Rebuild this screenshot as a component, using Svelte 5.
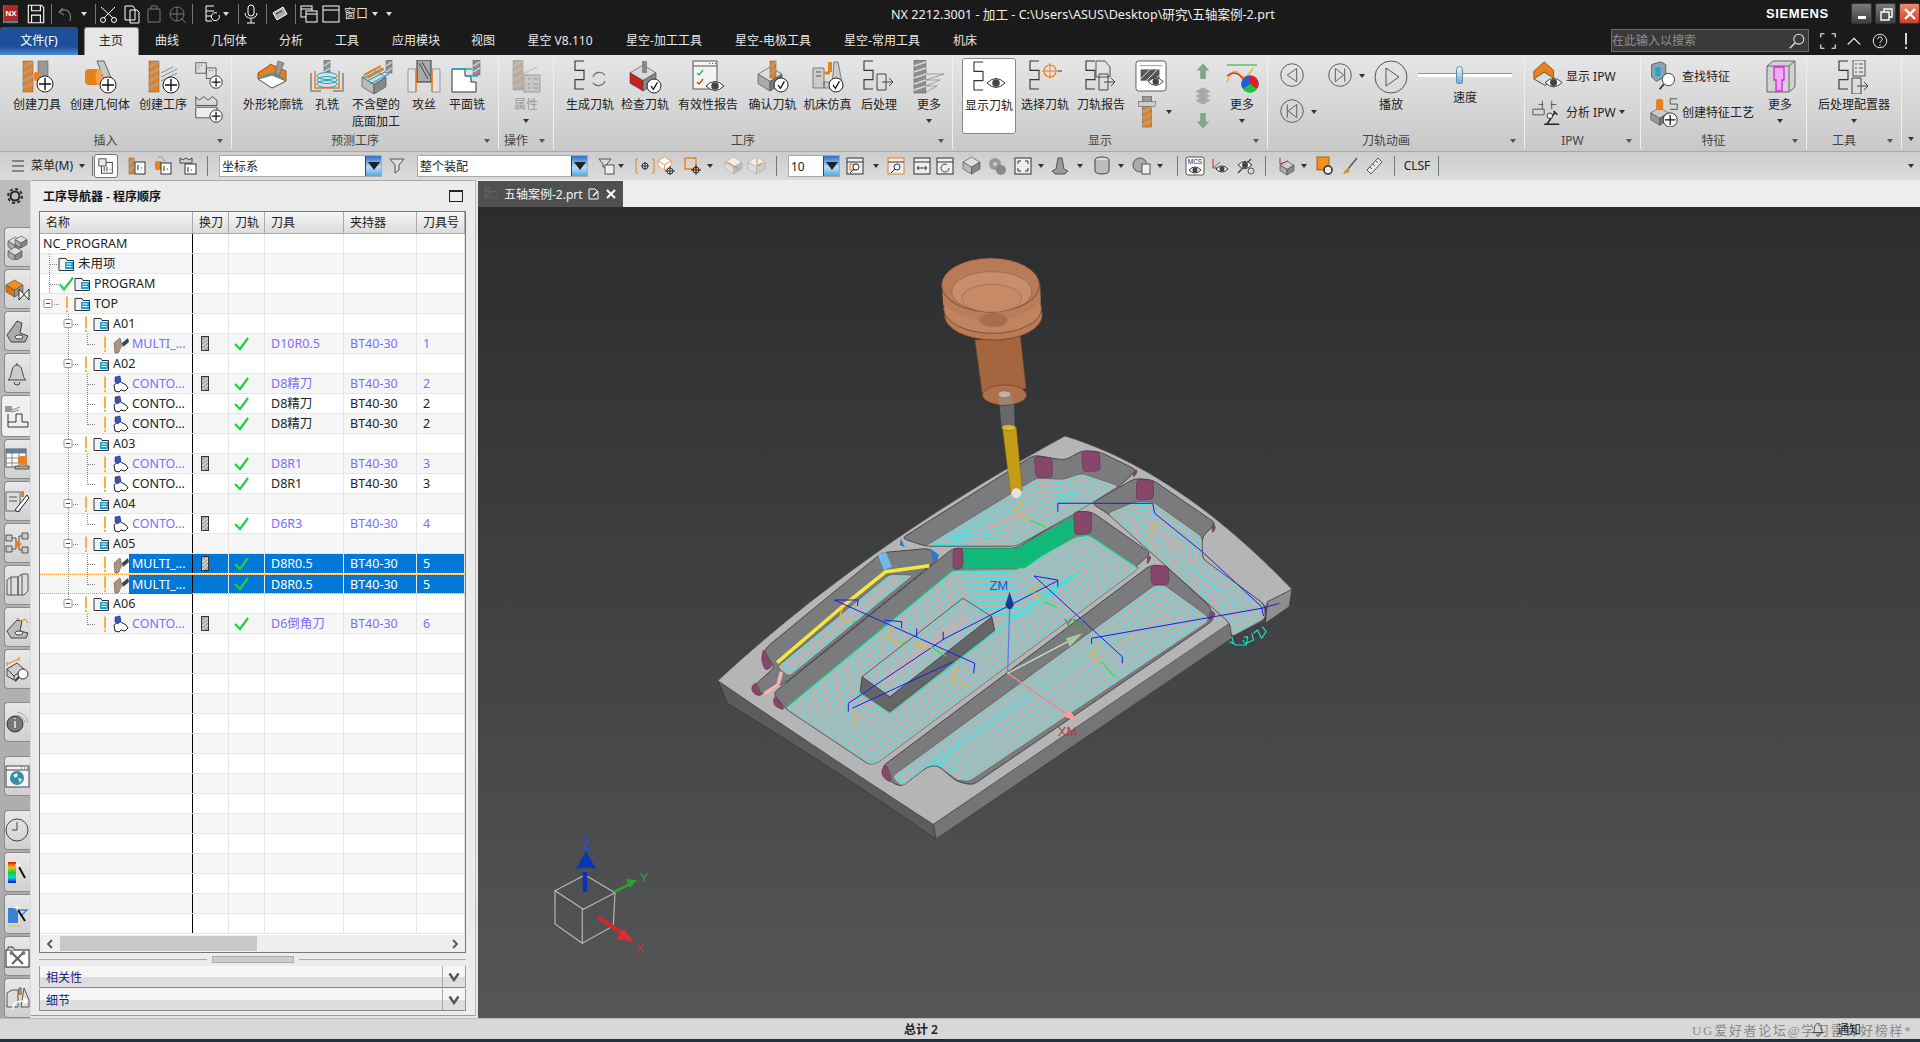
<script>
	// ---------- small svg helpers for the icons ----------
	const mill = (x, y, w, h) => {
		let s = `<rect x="${x}" y="${y}" width="${w}" height="${h}" fill="#e8801e" stroke="#7a5a3a" stroke-width=".5"/>`;
		for (let k = y + 4; k < y + h; k += 7) s += `<path d="M${x} ${k + 2}L${x + w} ${k - 3}" stroke="#a2a2a2" stroke-width="2.2"/>`;
		return s;
	};
	const gmill = (x, y, w, h) => {
		let s = `<rect x="${x}" y="${y}" width="${w}" height="${h}" fill="#8e8e8e" stroke="#555" stroke-width=".5"/>`;
		for (let k = y + 4; k < y + h; k += 6) s += `<path d="M${x} ${k + 2}L${x + w} ${k - 2}" stroke="#d8d8d8" stroke-width="1.4"/>`;
		return s;
	};
	const plus = (cx, cy, r = 8) =>
		`<circle cx="${cx}" cy="${cy}" r="${r}" fill="#fff" stroke="#222"/><path d="M${cx - r + 2} ${cy}H${cx + r - 2}M${cx} ${cy - r + 2}V${cy + r - 2}" stroke="#111" stroke-width="1.4"/>`;
	const tick = (cx, cy, r = 7) =>
		`<circle cx="${cx}" cy="${cy}" r="${r}" fill="#fff" stroke="#222"/><path d="M${cx - 3} ${cy}l2.4 3.4 4-7" fill="none" stroke="#111" stroke-width="1.3"/>`;
	const eye = (cx, cy, r = 8) =>
		`<path d="M${cx - r} ${cy}Q${cx} ${cy - r} ${cx + r} ${cy}Q${cx} ${cy + r} ${cx - r} ${cy}Z" fill="#fff" stroke="#333"/><circle cx="${cx}" cy="${cy}" r="${r * 0.42}" fill="#444"/>`;
	const zig = (x, y, w = 9, h = 28) => {
		const s = h / 3;
		return `<path d="M${x + w} ${y}H${x}V${y + s}H${x + w}V${y + 2 * s}H${x}V${y + h}H${x + w}" fill="none" stroke="#333" stroke-width="1.1"/>`;
	};
	const arrowBox = (x, y) =>
		`<path d="M${x} ${y}h9v16h-9zM${x + 5} ${y + 8}h11M${x + 12} ${y + 4}l4 4-4 4" fill="none" stroke="#444"/>`;
	const cube = (x, y, s, t, l, r) =>
		`<path d="M${x} ${y + s * 0.3}L${x + s / 2} ${y}L${x + s} ${y + s * 0.3}L${x + s / 2} ${y + s * 0.6}Z" fill="${t}" stroke="#444" stroke-width=".6"/><path d="M${x} ${y + s * 0.3}L${x + s / 2} ${y + s * 0.6}V${y + s}L${x} ${y + s * 0.7}Z" fill="${l}" stroke="#444" stroke-width=".6"/><path d="M${x + s} ${y + s * 0.3}L${x + s / 2} ${y + s * 0.6}V${y + s}L${x + s} ${y + s * 0.7}Z" fill="${r}" stroke="#444" stroke-width=".6"/>`;
	const circ = (cx, cy, r, inner) =>
		`<circle cx="${cx}" cy="${cy}" r="${r}" fill="none" stroke="#555"/><path d="${inner}" fill="none" stroke="#555"/>`;

	const icons = {
		createTool: mill(3, 1, 10, 31) + `<rect x="18" y="1" width="10" height="20" fill="#999" stroke="#555" stroke-width=".5"/><rect x="14" y="12" width="6" height="9" rx="2" fill="#e8801e"/>` + plus(25, 24),
		createGeom: `<path d="M14 1h7l10 24h-8z" fill="#c8c8c8" stroke="#666"/><rect x="2" y="9" width="15" height="16" rx="4" fill="#e8801e"/><ellipse cx="16" cy="17" rx="3.5" ry="8" fill="#f4a04c"/>` + plus(25, 25),
		createOp: mill(3, 1, 10, 31) + `<path d="M15 17L31 9M15 21L31 13M15 13l12-6" stroke="#888"/>` + plus(25, 25),
		smallA: `<path d="M2 3h12v12h-12zM14 9h11v12h-11z" fill="#ddd" stroke="#555"/><path d="M5 6h1M8 6h1M5 9h1M17 12h1M20 12h1" stroke="#333"/>` + plus(25, 25, 7),
		smallB: `<path d="M2 3l4 4 5-4 5 4 5-4 5 4V13H2zM2 19h24" fill="none" stroke="#444"/><path d="M2 15h24v12H2z" fill="#eee" stroke="#444"/>` + plus(25, 25, 7),
		profile: `<path d="M2 13L14 5v-1l16 7v10L16 28 2 19z" fill="#e8801e" stroke="#8a5a20"/><path d="M2 19l14 9 14-7-14-6z" fill="#fff" stroke="#666"/><path d="M5 18l11 -5 12 5" fill="none" stroke="#1aa7c9" stroke-width="1.4"/>` + `<path d="M22 1l6 2-5 13-4-2z" fill="#999" stroke="#555" stroke-width=".6"/>`,
		hole: gmill(14, 0, 6, 12) + `<path d="M1 13v18h10M33 13v18H23" fill="none" stroke="#999" stroke-width="2"/><path d="M5 11v17h24V11" fill="none" stroke="#e8801e" stroke-width="1.5"/><ellipse cx="17" cy="16" rx="10" ry="3.5" fill="none" stroke="#1aa7c9"/><ellipse cx="17" cy="20" rx="10" ry="3.5" fill="none" stroke="#1aa7c9"/><ellipse cx="17" cy="24" rx="10" ry="3.5" fill="none" stroke="#1aa7c9"/>`,
		floor: cube(3, 10, 24, '#e0e0e0', '#bbb', '#888') + `<path d="M5 18L24 8M8 21L28 11M11 24L30 14" stroke="#1aa7c9" stroke-width="1.3"/><path d="M5 15L22 6M8 18L25 9" stroke="#e8801e" stroke-width="2"/>` + gmill(27, 0, 6, 13),
		tap: `<path d="M1 9h8v23H1zM25 9h8v23h-8z" fill="#e4e4e4" stroke="#999"/><rect x="10" y="0" width="14" height="22" fill="#aaa" stroke="#333"/><path d="M12 3l9 16M15 2l8 14" stroke="#444"/><path d="M9 10v22M25 10v22" stroke="#e8801e" stroke-width="1.4"/>`,
		face: `<path d="M2 9v23h24V22h-5v-6h-6V9z" fill="#fff" stroke="#333"/><path d="M2 9h20M15 16h13" stroke="#1aa7c9" stroke-width="1.4"/>` + gmill(23, 0, 7, 15),
		attr: `<g opacity=".6">` + mill(4, 0, 10, 30).replace('#e8801e', '#a68a72') + `<path d="M14 14l14-7" stroke="#999"/><rect x="15" y="15" width="16" height="17" fill="#b8b8b8" stroke="#777"/><path d="M19 19h2M24 19h5M19 24h2M24 24h5M19 28h2M24 28h5" stroke="#666"/></g>`,
		gen: zig(2, 1) + `<path d="M20 17a7 7 0 0 1 12-2M32 21a7 7 0 0 1-12 2" fill="none" stroke="#777" stroke-width="1.3"/>`,
		verify: cube(2, 5, 26, '#d8d8d8', '#c82020', '#888') + `<rect x="14" y="1" width="5" height="12" fill="#888"/>` + tick(26, 26),
		report: `<rect x="2" y="1" width="24" height="28" fill="#f3f3f3" stroke="#555"/><path d="M2 6h24M18 3.5h1M21 3.5h1M24 3.5h1" stroke="#555"/><path d="M6 13l2 2 4-5" fill="none" stroke="#1fc23e" stroke-width="1.3"/><path d="M6 22l2 2 4-5" fill="none" stroke="#d8352b" stroke-width="1.3"/>` + eye(24, 26, 9),
		confirm: cube(2, 7, 24, '#ddd', '#aaa', '#777') + mill(14, 1, 6, 17) + tick(25, 25),
		machine: `<path d="M2 8h11v20H2zM23 2h4l5 26H21zM13 22h9v6h-9z" fill="#ccc" stroke="#555" stroke-width=".7"/><path d="M5 12h5M5 16h5" stroke="#555"/><rect x="17" y="2" width="4" height="10" fill="#e8801e"/><path d="M13 13h6" stroke="#e8801e" stroke-width="3"/>` + tick(25, 25),
		post: zig(2, 1) + arrowBox(15, 14),
		more: gmill(2, 0, 12, 33) + `<path d="M14 14h18L14 20M14 20h14L14 26M14 26h11L14 32" fill="#ddd" stroke="#777" stroke-width=".6"/>`,
		show: zig(2, 1) + eye(24, 22, 9),
		select: zig(2, 1) + `<circle cx="22" cy="11" r="6" fill="none" stroke="#e8801e" stroke-width="1.2"/><path d="M14 11h16M22 3v16" stroke="#e8801e"/><path d="M30 11h4" stroke="#333"/>`,
		toolrep: zig(2, 1) + `<path d="M12 1h9l5 6v10H12z" fill="none" stroke="#555"/>` + arrowBox(15, 14),
		hatchEye: `<rect x="1" y="1" width="32" height="32" rx="3" fill="#fff" stroke="#555"/><path d="M5 6h24" stroke="#e8801e"/><rect x="6" y="10" width="20" height="12" fill="#555"/><path d="M6 20l10-10M12 22l12-12M20 22l6-6" stroke="#eee"/>` + eye(22, 23, 8),
		cutter: `<rect x="12" y="0" width="10" height="7" fill="#999" stroke="#444" stroke-width=".5"/><rect x="8" y="6" width="18" height="5" fill="#ccc" stroke="#444" stroke-width=".5"/>` + mill(12, 11, 10, 22),
		up: `<path d="M17 5l9 10h-5v12h-8V15H8z" fill="#7fa785"/>`,
		layers: `<path d="M17 4l11 6-11 6-11-6zM17 11l11 6-11 6-11-6zM17 18l11 6-11 6-11-6z" fill="#aaa" stroke="#999" stroke-width=".5"/>`,
		down: `<path d="M17 29L8 19h5V7h8v12h5z" fill="#7fa785"/>`,
		moreDisp: `<path d="M2 5h30" stroke="#1faa3c"/><path d="M2 22Q8 6 14 14T28 8" fill="none" stroke="#e8b81e" stroke-width="1.5"/><path d="M2 16Q12 8 20 22" fill="none" stroke="#e02a2a" stroke-width="1.5"/><circle cx="25" cy="24" r="8.5" fill="#1fc23e"/><path d="M25 24V15.5A8.5 8.5 0 0 1 32 29z" fill="#d82020"/><path d="M25 24L32 29A8.5 8.5 0 0 1 18 29z" fill="#1fc23e"/><path d="M25 24V15.5A8.5 8.5 0 0 0 18 29z" fill="#1f5fd8"/>`,
		prev: circ(17, 16, 12, 'M22 9L12 16l10 7zM24 9'),
		next: circ(17, 16, 12, 'M12 9l9 7-9 7zM22 9v14'),
		first: circ(17, 16, 12, 'M22 9l-9 7 9 7zM12 9v14'),
		play: circ(17, 17, 16, 'M12 8l13 9-13 9z'),
		ipwShow: `<path d="M3 12L14 2l10 9v8l-9 8-12-7z" fill="#e8801e" stroke="#8a5a20"/><path d="M3 20l12 7 9-8-10-6z" fill="#ddd" stroke="#555"/>` + eye(24, 24, 9),
		ipwAna: `<path d="M2 20h12V14H2zM12 5v9M22 5v9M8 9h5M27 9h-6" fill="none" stroke="#555"/><path d="M14 30h16M17 30l8-12M24 16l4 4" fill="none" stroke="#222" stroke-width="1.6"/><circle cx="20" cy="21" r="3" fill="#eee" stroke="#333"/>`,
		fFind: `<path d="M3 4l10-3 6 3v14l-11 5-5-5z" fill="#8aa4b4" stroke="#555"/><rect x="7" y="7" width="6" height="10" fill="#1aa7c9"/><circle cx="22" cy="21" r="7" fill="#fff" stroke="#333"/><path d="M17 26l-5 6" stroke="#333" stroke-width="2"/>`,
		fProc: cube(2, 12, 20, '#ccc', '#999', '#777') + `<rect x="8" y="2" width="8" height="13" rx="3" fill="#e8801e"/><path d="M24 2h8M24 2v6h8v6h-8" fill="none" stroke="#444"/>` + plus(24, 26),
		fMore: `<path d="M4 6L10 1h22v26l-6 5H4z" fill="#cfd4cf" stroke="#666"/><path d="M4 6h22v26M26 6l6-5" fill="none" stroke="#666"/><path d="M11 7h10v13h-2v11h-6V20h-2z" fill="#f5a8f5" stroke="#e020e0" stroke-width="1.3"/>`,
		postCfg: zig(2, 1) + `<rect x="16" y="0" width="12" height="16" fill="none" stroke="#555"/><path d="M18 4h2M22 4h4M18 8h2M22 8h4M18 12h2M22 12h4" stroke="#555"/>` + arrowBox(15, 18)
	};

	// 20px toolbar and quick access glyphs
	const t20 = {
		filt: `<path d="M2 3h14l-5 6v5l-4 3V9z" fill="#ddd" stroke="#555"/>`,
		doc: `<rect x="5" y="6" width="12" height="12" fill="#fff" stroke="#333"/><rect x="2" y="2" width="8" height="8" fill="#e8e8e8" stroke="#444"/><path d="M8 11v5M11 11v5M14 14h1" stroke="#222"/>`,
		mdoc: mill(2, 2, 5, 16) + `<rect x="8" y="6" width="10" height="12" fill="#fff" stroke="#333"/><path d="M11 9v5M14 12h1" stroke="#222"/>`,
		odoc: `<rect x="2" y="5" width="7" height="9" rx="2" fill="#e8801e"/><path d="M5 1h4l3 5" fill="none" stroke="#999"/><rect x="8" y="7" width="10" height="11" fill="#fff" stroke="#333"/><path d="M11 10v5M14 13h1" stroke="#222"/>`,
		cdoc: `<path d="M2 2l3 2 3-2 3 2 3-2v5H2z" fill="none" stroke="#444"/><rect x="7" y="8" width="11" height="10" fill="#fff" stroke="#333"/><path d="M10 11v5M13 14h1" stroke="#222"/>`,
		listf: `<path d="M2 3h12l-4 5v3H6V8z" fill="#ddd" stroke="#555"/><rect x="8" y="9" width="9" height="9" fill="#eee" stroke="#555"/>`,
		cbrack: `<path d="M3 3H1v14h2M17 3h2v14h-2" fill="none" stroke="#e8801e"/><path d="M6 10h8M10 6v8" stroke="#333"/><circle cx="10" cy="10" r="3" fill="none" stroke="#333"/>`,
		ocube: cube(2, 1, 13, '#fff', '#fff', '#fff').replace(/#444/g, '#e8801e') + `<circle cx="14" cy="15" r="3" fill="none" stroke="#333"/><path d="M9 15h10M14 10v9" stroke="#333"/>`,
		osq: `<path d="M2 2h11v11H2z" fill="none" stroke="#e8801e" stroke-width="1.3"/><circle cx="13" cy="14" r="3" fill="none" stroke="#222"/><path d="M8 14h10M13 9v10" stroke="#222"/>`,
		cubeA: cube(2, 1, 17, '#eee', '#ddd', '#bbb').replace(/#444/g, '#aaa') + `<path d="M4 6l12 7" stroke="#e8801e"/>`,
		cubeB: cube(2, 1, 17, '#eee', '#ddd', '#ccc').replace(/#444/g, '#aaa') + `<path d="M11 2v8l5-3" fill="none" stroke="#e8801e"/>`,
		frame: `<rect x="2" y="2" width="16" height="16" fill="#eee" stroke="#333"/><path d="M2 6h16" stroke="#333"/><rect x="5" y="8" width="7" height="6" fill="#ddd" stroke="#e8801e"/><circle cx="11" cy="11" r="3" fill="#fff" stroke="#333"/><path d="M9 13l-4 4" stroke="#333"/>`,
		frameO: `<rect x="2" y="2" width="16" height="16" fill="#eee" stroke="#e8801e"/><path d="M2 6h16" stroke="#333"/><circle cx="11" cy="11" r="3" fill="#fff" stroke="#333"/><path d="M9 13l-4 4" stroke="#333"/>`,
		frameW: `<rect x="2" y="2" width="16" height="16" fill="#eee" stroke="#333"/><path d="M2 6h16M5 12h10M5 12l2-2M5 12l2 2M15 12l-2-2M15 12l-2 2" fill="none" stroke="#333"/>`,
		frameR: `<rect x="2" y="2" width="16" height="16" fill="#eee" stroke="#333"/><path d="M2 6h16" stroke="#333"/><path d="M14 12a4 4 0 1 1-2-3.4" fill="none" stroke="#444"/>`,
		hex: cube(2, 1, 17, '#ddd', '#bbb', '#888'),
		gears: `<circle cx="8" cy="8" r="6" fill="#999"/><circle cx="14" cy="14" r="5" fill="#888"/><circle cx="8" cy="8" r="2" fill="#ccc"/>`,
		corners: `<rect x="2" y="2" width="16" height="16" fill="#eee" stroke="#333"/><path d="M5 8V5h3M15 8V5h-3M5 12v3h3M15 12v3h-3" fill="none" stroke="#333"/>`,
		hat: `<path d="M8 2h4l2 11 4 2-3 3H5l-3-3 4-2z" fill="#999" stroke="#555"/>`,
		cyl: `<ellipse cx="10" cy="4" rx="7" ry="3" fill="#ddd" stroke="#444"/><path d="M3 4v11c0 4 14 4 14 0V4" fill="#bbb" stroke="#444"/>`,
		gcirc: `<circle cx="8" cy="9" r="7" fill="#aaa" stroke="#555"/><rect x="10" y="8" width="8" height="10" fill="#eee" stroke="#555"/>`,
		mcs: `<rect x="1" y="1" width="18" height="18" rx="2" fill="#fff" stroke="#555"/><text x="10" y="8" font-size="6.5" font-family="Liberation Sans" text-anchor="middle" fill="#222">MCS</text>` + eye(10, 14, 6),
		axEye: `<path d="M3 3v9h9" fill="none" stroke="#d02020"/><path d="M3 12L10 6" stroke="#22aa44"/>` + eye(12, 13, 6),
		pct: `<path d="M3 17L16 3" stroke="#555" stroke-width="1.6"/>` + eye(10, 9, 7) + `<circle cx="16" cy="15" r="3" fill="none" stroke="#555"/>`,
		axCube: cube(3, 5, 14, '#ccc', '#aaa', '#888') + `<path d="M3 8V2M3 8l8-3" stroke="#d02020"/>`,
		oGear: `<rect x="2" y="1" width="12" height="13" fill="#f09020" stroke="#b06010"/><circle cx="13" cy="14" r="4" fill="#eee" stroke="#333" stroke-width="1.6"/>`,
		brush: `<path d="M17 2L8 13" stroke="#555" stroke-width="1.4"/><path d="M8 12l-3 2-2 4 5-1 2-3z" fill="#c0a030"/>`,
		ruler: `<path d="M14 2l4 4L7 18l-4-4z" fill="#eee" stroke="#555"/><path d="M12 5l2 2M9 8l2 2M6 11l2 2" stroke="#555"/>`,
		menu: `<path d="M4 5h12M4 10h12M4 15h12" stroke="#333"/>`,
		save: `<path d="M3 2h12l2 2v14H3z" fill="none" stroke="#fff"/><path d="M6 2v5h8V2M6 18v-7h8v7" fill="none" stroke="#fff"/>`,
		undo: `<path d="M4 8c8-5 13 0 11 9M4 8l4-4M4 8l5 3" fill="none" stroke="#777" stroke-width="1.2"/>`,
		cut: `<path d="M17 3L6 14M3 3l12 11" stroke="#fff"/><circle cx="5" cy="16" r="2.5" fill="none" stroke="#fff"/><circle cx="16" cy="16" r="2.5" fill="none" stroke="#fff"/>`,
		copy: `<path d="M3 2h8l2 3v11H3zM8 6h7l2 2v11H8z" fill="#1a1a1a" stroke="#fff"/>`,
		paste: `<path d="M3 5h12v13H3zM6 5V2h6v3" fill="none" stroke="#777"/>`,
		snap: `<circle cx="9" cy="10" r="7" fill="none" stroke="#777"/><path d="M2 10h14M9 3v14M13 14l5 5" stroke="#777"/>`,
		sloop: `<path d="M12 2H4v5h8M4 7v5h6M4 12v5h6" fill="none" stroke="#fff"/><path d="M17 11a4 4 0 1 1-2-2" fill="none" stroke="#fff"/>`,
		mic: `<rect x="7" y="1" width="6" height="11" rx="3" fill="none" stroke="#fff"/><path d="M4 9c0 7 12 7 12 0M10 15v4M6 19h8" fill="none" stroke="#fff"/>`,
		hand: `<path d="M3 9l10-6 4 7-10 6z" fill="#aaa" stroke="#fff"/><path d="M6 10l6-3" stroke="#222"/>`,
		win2: `<rect x="2" y="2" width="11" height="11" fill="none" stroke="#fff"/><rect x="7" y="7" width="11" height="11" fill="#1a1a1a" stroke="#fff"/><path d="M7 10h11M2 5h11" stroke="#fff"/>`,
		win: `<rect x="2" y="2" width="16" height="16" fill="none" stroke="#fff"/><path d="M2 6h16" stroke="#fff"/>`,
		mag: `<circle cx="12" cy="8" r="5.5" fill="none" stroke="#ddd" stroke-width="1.2"/><path d="M8 12l-6 6" stroke="#ddd" stroke-width="1.6"/>`,
		corner: `<path d="M2 6V2h4M14 2h4v4M2 14v4h4M18 14v4h-4" fill="none" stroke="#fff" stroke-width="1.2"/>`,
		caret: `<path d="M3 14l7-7 7 7" fill="none" stroke="#fff" stroke-width="1.2"/>`,
		help: `<circle cx="10" cy="10" r="7.5" fill="none" stroke="#fff"/><path d="M7.5 8a2.5 2.5 0 1 1 3.4 2.3c-.7.3-.9.7-.9 1.7M10 14v1.5" fill="none" stroke="#fff"/>`,
		bang: `<path d="M10 1v13M10 16.5v2.5" stroke="#fff" stroke-width="1.8"/>`,
		bell: `<path d="M5 14c2-3 0-10 5-10s3 7 5 10z" fill="none" stroke="#444"/><path d="M4 14h12M8 16a2 2 0 0 0 4 0" fill="none" stroke="#444"/>`
	};

	// strip on the far left
	const strip = {
		gear: `<circle cx="12" cy="12" r="4.5" fill="none" stroke="#222" stroke-width="2"/><circle cx="12" cy="12" r="7" fill="none" stroke="#222" stroke-width="1.8" stroke-dasharray="3 2.5"/>`,
		s1: cube(3, 2, 14, '#ddd', '#aaa', '#888') + cube(3, 12, 14, '#ddd', '#aaa', '#888') + cube(10, 1, 12, '#ddd', '#aaa', '#888'),
		s2: cube(1, 3, 17, '#f09020', '#e07010', '#999') + `<path d="M14 12l10 11V12L14 23z" fill="#fff" stroke="#222"/>`,
		s3: `<path d="M2 16L12 2l5 2-2 10 8 3-3 6H6z" fill="#aaa" stroke="#444"/><ellipse cx="14" cy="18" rx="4" ry="2" fill="#eee" stroke="#444"/>`,
		s4: `<path d="M12 2v2c-7 0-4 12-9 15h18c-5-3-2-15-9-15M9 21a3 3 0 0 0 6 0" fill="#ccc" stroke="#444"/>`,
		s5: `<path d="M1 2h7v6H1z" fill="#999"/><path d="M8 6l8-3M8 8l7-2" stroke="#888"/><path d="M4 10v13h20v-5h-6v-8h-6v8H4" fill="none" stroke="#333"/>`,
		s6: `<rect x="1" y="2" width="20" height="18" fill="#fff" stroke="#555"/><path d="M1 6h20M1 11h20M1 16h20M7 2v18M14 2v18" stroke="#888"/><rect x="1" y="2" width="20" height="4" fill="#5d7fa8"/><rect x="13" y="9" width="9" height="9" rx="3" fill="#e8801e"/><path d="M10 19h14v3H10z" fill="#aaa" stroke="#555"/>`,
		s7: `<rect x="1" y="3" width="14" height="19" fill="#ddd" stroke="#666"/><path d="M4 8h8M4 12h8" stroke="#555"/><path d="M16 2h3v6h-3z" fill="#e8801e"/><path d="M22 6l-12 15 3 2L24 9z" fill="#fff" stroke="#222"/>`,
		s8: `<path d="M1 4h6v6H1zM1 15h6v6H1zM17 2h6v6h-6zM17 16h6v6h-6z" fill="#ccc" stroke="#555"/><path d="M7 7h4v11H7M17 5h-3v14h3" fill="none" stroke="#555"/><path d="M10 8l7 5-7 5z" fill="#e8801e"/>`,
		s9: `<path d="M2 7l4-3h7v18H6l-4 0zM13 4l4-3h6v17l-4 4h-6z" fill="#ddd" stroke="#555"/><path d="M6 4v18M17 2v20" stroke="#555"/>`,
		s10: `<path d="M2 16L12 5l5 1-2 10 8 2-2 5H6z" fill="#bbb" stroke="#444"/><ellipse cx="14" cy="18" rx="4" ry="2" fill="#eee" stroke="#444"/><path d="M12 3l4 3 4-2 3 4" fill="none" stroke="#e8801e"/>`,
		s11: `<path d="M2 12l10-6 7 6-10 7zM2 12v7l7 4v-4" fill="#ccc" stroke="#444"/><path d="M2 7l12-5M2 5v4M14 0v4" stroke="#e8801e"/><circle cx="18" cy="17" r="5" fill="#fff" stroke="#333"/><path d="M14 20l-4 4" stroke="#333" stroke-width="2"/>`,
		s12: `<circle cx="10" cy="14" r="8" fill="#777" stroke="#333"/><path d="M10 11v7M10 8v1" stroke="#fff" stroke-width="1.3"/><path d="M12 2a12 12 0 0 1 11 11M12 5a9 9 0 0 1 8 8" fill="none" stroke="#aaa"/>`,
		s13: `<rect x="1" y="2" width="23" height="21" fill="#f5f5f5" stroke="#444"/><path d="M1 6h23M16 4h1M19 4h1M22 4h1" stroke="#444"/><circle cx="12" cy="14" r="7" fill="#3a8aa8"/><path d="M8 11l4-2 1 3-3 2zM13 14l4 1-2 4z" fill="#bfe"/>`,
		s14: `<circle cx="12" cy="12" r="11" fill="none" stroke="#444"/><path d="M12 4v8H7" fill="none" stroke="#444"/>`,
		s15: `<defs><linearGradient id="rb" x1="0" y1="0" x2="0" y2="1"><stop offset="0" stop-color="#e01010"/><stop offset=".25" stop-color="#f0c010"/><stop offset=".5" stop-color="#10d030"/><stop offset=".75" stop-color="#10d0d0"/><stop offset="1" stop-color="#1010e0"/></linearGradient></defs><rect x="3" y="2" width="8" height="21" fill="url(#rb)"/><path d="M14 7l6 11" stroke="#111" stroke-width="2"/><path d="M13 2v6M10 5h6" stroke="#fff"/>`,
		s16: `<path d="M3 6h10v15H3z" fill="#3a7fd8"/><path d="M13 8h9l-6 6" fill="none" stroke="#3a7fd8" stroke-width="1.4"/><path d="M3 24h12" stroke="#e0c010"/><path d="M13 8l7 11" stroke="#111" stroke-width="2"/><path d="M12 3v6M9 6h6" stroke="#fff"/>`,
		s17: `<rect x="1" y="6" width="23" height="17" fill="#fff" stroke="#222"/><path d="M3 6V3h5l2 3" fill="#ccc" stroke="#444"/><path d="M7 9l11 11M18 9L7 20" stroke="#666" stroke-width="2.2"/><circle cx="6.5" cy="9" r="2" fill="#777"/><circle cx="18.5" cy="9" r="2" fill="#777"/>`,
		s18: `<path d="M2 7l5-3h6v17H2zM14 2h2v6h-2zM19 2l5 12v7h-8z" fill="#ddd" stroke="#555"/><path d="M14 4h3v5h-3z" fill="#e8801e"/><path d="M8 23c0-7 5-8 13-8M18 12l4 3-4 3" fill="none" stroke="#fff" stroke-width="1.6"/>`
	};
	const stripBtns = [
		{ i: 's1' }, { i: 's2' }, { i: 's3' }, { i: 's4' }, { i: 's5', on: true }, { i: 's6' }, { i: 's7' }, { i: 's8' },
		{ i: 's9' }, { i: 's10' }, { i: 's11' }, { i: 's12', gap: 13 }, { i: 's13', gap: 14 }, { i: 's14', gap: 14 },
		{ i: 's15' }, { i: 's16' }, { i: 's17' }, { i: 's18' }
	];

	// ---------- bars are laid out from the centre of each element ----------
	function place(items) {
		let end = 0;
		return items.map((it) => {
			const w = it.w ?? (it.tri ? 7 : it.sep ? 1 : 20);
			const ml = it.c - w / 2 - end;
			end = it.c + w / 2;
			return { ...it, w, ml };
		});
	}
	const qat = place([
		{ c: 36, i: 'save', s: 22 }, { c: 51, sep: 1 }, { c: 65, i: 'undo' }, { c: 84, tri: 1 }, { c: 95, sep: 1 },
		{ c: 108, i: 'cut' }, { c: 132, i: 'copy' }, { c: 155, i: 'paste' }, { c: 178, i: 'snap' }, { c: 192, sep: 1 },
		{ c: 212, i: 'sloop' }, { c: 226, tri: 1 }, { c: 238, sep: 1 }, { c: 251, i: 'mic' }, { c: 266, sep: 1 },
		{ c: 280, i: 'hand' }, { c: 295, sep: 1 }, { c: 309, i: 'win2' }, { c: 331, i: 'win' },
		{ c: 356, w: 26, text: '窗口' }, { c: 375, tri: 1 }, { c: 389, tri: 1 }
	]);
	const tabs = place([
		{ c: 39, w: 78, text: '文件(F)', file: true }, { c: 111, w: 55, text: '主页', on: true }, { c: 167, w: 40, text: '曲线' },
		{ c: 229, w: 50, text: '几何体' }, { c: 291, w: 40, text: '分析' }, { c: 347, w: 40, text: '工具' },
		{ c: 416, w: 60, text: '应用模块' }, { c: 483, w: 40, text: '视图' }, { c: 560, w: 80, text: '星空 V8.110' },
		{ c: 664, w: 90, text: '星空-加工工具' }, { c: 773, w: 90, text: '星空-电极工具' },
		{ c: 882, w: 90, text: '星空-常用工具' }, { c: 965, w: 40, text: '机床' }
	]);
	const tbar = place([
		{ c: 18, i: 'menu' }, { c: 52, w: 43, text: '菜单(M)' }, { c: 82, tri: 1 }, { c: 92, sep: 1 },
		{ c: 106, i: 'doc', box: 1 }, { c: 137, i: 'mdoc' }, { c: 163, i: 'odoc' }, { c: 188, i: 'cdoc' }, { c: 207, sep: 1 },
		{ c: 300.5, w: 163, combo: '坐标系' }, { c: 398, i: 'filt' }, { c: 502.5, w: 171, combo: '整个装配' },
		{ c: 607, i: 'listf' }, { c: 621, tri: 1 }, { c: 645, i: 'cbrack' }, { c: 666, i: 'ocube' }, { c: 693, i: 'osq' }, { c: 710, tri: 1 },
		{ c: 733, i: 'cubeA' }, { c: 756, i: 'cubeB' }, { c: 776, sep: 1 }, { c: 814, w: 52, combo: '10' },
		{ c: 855, i: 'frame' }, { c: 876, tri: 1 }, { c: 896, i: 'frameO' }, { c: 922, i: 'frameW' }, { c: 945, i: 'frameR' },
		{ c: 971, i: 'hex' }, { c: 997, i: 'gears' }, { c: 1023, i: 'corners' }, { c: 1041, tri: 1 }, { c: 1060, i: 'hat' }, { c: 1080, tri: 1 },
		{ c: 1102, i: 'cyl' }, { c: 1121, tri: 1 }, { c: 1142, i: 'gcirc' }, { c: 1160, tri: 1 }, { c: 1177, sep: 1 },
		{ c: 1195, i: 'mcs' }, { c: 1220, i: 'axEye' }, { c: 1245, i: 'pct' }, { c: 1265, sep: 1 }, { c: 1287, i: 'axCube' }, { c: 1304, tri: 1 },
		{ c: 1325, i: 'oGear' }, { c: 1350, i: 'brush' }, { c: 1374, i: 'ruler' }, { c: 1394, sep: 1 },
		{ c: 1417, w: 30, text: 'CLSF' }, { c: 1438, sep: 1 }, { c: 1911, tri: 1 }
	]);

	// ---------- ribbon ----------
	const ribbon = [
		{ title: '插入', w: 232, pad: 6, items: [
			{ w: 62, i: 'createTool', l: ['创建刀具'] }, { w: 64, i: 'createGeom', l: ['创建几何体'] }, { w: 62, i: 'createOp', l: ['创建工序'] },
			{ w: 30, col: ['smallA', 'smallB'] } ] },
		{ title: '预测工序', w: 267, pad: 10, items: [
			{ w: 62, i: 'profile', l: ['外形轮廓铣'] }, { w: 46, i: 'hole', l: ['孔铣'] }, { w: 52, i: 'floor', l: ['不含壁的', '底面加工'] },
			{ w: 44, i: 'tap', l: ['攻丝'] }, { w: 42, i: 'face', l: ['平面铣'] } ] },
		{ title: '操作', w: 55, pad: 7, items: [{ w: 40, i: 'attr', l: ['属性'], tri: true, dim: true }] },
		{ title: '工序', w: 399, pad: 8, items: [
			{ w: 56, i: 'gen', l: ['生成刀轨'] }, { w: 54, i: 'verify', l: ['检查刀轨'] }, { w: 72, i: 'report', l: ['有效性报告'] },
			{ w: 57, i: 'confirm', l: ['确认刀轨'] }, { w: 53, i: 'machine', l: ['机床仿真'] }, { w: 50, i: 'post', l: ['后处理'] },
			{ w: 50, i: 'more', l: ['更多'], tri: true } ] }
	];

	// ---------- operation navigator ----------
	const op = (name, kind, tool, no, link, cutter) => ({ t: 'op', name, kind, tool, no, link, cutter });
	const rows = [
		{ t: 'root', name: 'NC_PROGRAM' }, { t: 'unused', name: '未用项' }, { t: 'prog', name: 'PROGRAM' }, { t: 'top', name: 'TOP' },
		{ t: 'grp', name: 'A01' }, op('MULTI_...', 'm', 'D10R0.5', 1, true, true),
		{ t: 'grp', name: 'A02' }, op('CONTO...', 'c', 'D8精刀', 2, true, true), op('CONTO...', 'c', 'D8精刀', 2), op('CONTO...', 'c', 'D8精刀', 2),
		{ t: 'grp', name: 'A03' }, op('CONTO...', 'c', 'D8R1', 3, true, true), op('CONTO...', 'c', 'D8R1', 3),
		{ t: 'grp', name: 'A04' }, op('CONTO...', 'c', 'D6R3', 4, true, true),
		{ t: 'grp', name: 'A05' }, { ...op('MULTI_...', 'm', 'D8R0.5', 5, false, true), sel: 1 }, { ...op('MULTI_...', 'm', 'D8R0.5', 5), sel: 2 },
		{ t: 'grp', name: 'A06', end: true }, op('CONTO...', 'c', 'D6倒角刀', 6, true, true),
		...Array.from({ length: 15 }, () => ({ t: 'blank' }))
	];
	// the vertical run of each op is cut at the last op below its group
	const lastOps = new Set([5, 9, 12, 14, 17, 19]);
	const textX = { root: 43, unused: 78, prog: 94, top: 94, grp: 113, op: 132, blank: 43 };

	const folder = (x) =>
		`<path d="M${x} 4.5h7l1 2h6.5v10H${x}z" fill="#f2f2f2" stroke="#333"/><rect x="${x + 6}" y="8" width="8" height="7" fill="#16a2d8"/><path d="M${x + 7.5} 10h5M${x + 7.5} 12.5h5" stroke="#fff"/>`;
	const minus = (x) =>
		`<rect x="${x}" y="5.5" width="8" height="8" rx="1" fill="#fff" stroke="#999"/><path d="M${x + 2} 9.5h4" stroke="#444"/>`;
	const vdot = (x, y1, y2) => `<path d="M${x} ${y1}V${y2}" stroke="#888" stroke-dasharray="1 1"/>`;
	const hdot = (x1, x2, y) => `<path d="M${x1} ${y}H${x2}" stroke="#888" stroke-dasharray="1 1"/>`;
	const bangMark = (x) => `<rect x="${x}" y="2.5" width="2" height="12" fill="#f9b040"/><rect x="${x}" y="16" width="2" height="2" fill="#f9b040"/>`;
	const checkG = (x, y, s = 1) =>
		`<path d="M${x} ${y + 7 * s}l${4 * s} ${5 * s} ${9 * s} ${-12 * s}" fill="none" stroke="#22d044" stroke-width="${2.2}"/>`;
	const opIcon = (kind) =>
		kind === 'm'
			? `<path d="M114 9l6-5 2 7-4 8h-3z" fill="#999" stroke="#555" stroke-width=".6"/><path d="M116 8c1 3 1 6-1 10M119 7c1 3 1 6 0 11" fill="none" stroke="#e8801e"/><path d="M122 9l6-5 1 4-6 5z" fill="#444"/>`
			: `<path d="M114 11l5-4 7 4 2 3-3 3-4-1-2 2-4-1z" fill="#fff" stroke="#222"/><path d="M115 3l5-1 1 5-3 3-3-2z" fill="#3a50c8" stroke="#223" stroke-width=".5"/>`;
	function gutter(r, idx) {
		let s = '';
		const inA = idx > 3 && idx < 18;
		if (r.t === 'unused') s += vdot(49.5, 0, 20) + hdot(50, 58, 10.5) + folder(59);
		if (r.t === 'prog') s += vdot(49.5, 0, 20) + hdot(50, 59, 10.5) + checkG(60, 3.5) + folder(75);
		if (r.t === 'top') s += minus(44) + hdot(54, 60, 10.5) + bangMark(66) + folder(75);
		if (r.t === 'grp') s += (r.end ? vdot(68.5, 0, 6) : vdot(68.5, 0, 6) + vdot(68.5, 14, 20)) + minus(64) + hdot(73, 78, 10.5) + bangMark(85) + folder(94);
		if (r.t === 'op') {
			if (inA) s += vdot(68.5, 0, 20);
			s += vdot(87.5, 0, lastOps.has(idx) ? 11 : 20) + hdot(88, 96, 10.5) + bangMark(104) + opIcon(r.kind);
		}
		return s;
	}

	// ---------- the part on the canvas ----------
	// Coordinates were read off a crop that is 2.529x wide and 3x high.
	const z = ([X, Y]) => [+(700 + X / 2.529).toFixed(1), +(240 + Y / 3).toFixed(1)];
	const dOf = (pts, close = true) => 'M' + pts.map((p) => z(p).join(' ')).join('L') + (close ? 'Z' : '');
	const qarc = (p, c, q, n = 24) =>
		Array.from({ length: n + 1 }, (_, i) => {
			const t = i / n, u = 1 - t;
			return [u * u * p[0] + 2 * u * t * c[0] + t * t * q[0], u * u * p[1] + 2 * u * t * c[1] + t * t * q[1]];
		});

	const A = [45, 1322], B = [923, 588], C = [1497, 1048], D = [590, 1753];
	const topFace = [...qarc(A, [416, 915], B), ...qarc(B, [1210, 692], C).slice(1), [1435, 1085], [1425, 1125], [1345, 1145], D, ...qarc(D, [343, 1563], A).slice(1, -1)];
	const frontSide = [...qarc(A, [343, 1563], D), [597, 1797], ...qarc([597, 1797], [345, 1590], [70, 1390]).slice(1)];
	const rightSide = [D, [597, 1797], [1345, 1195], [1340, 1145]];
	const blockSide = [C, [1490, 1100], [1430, 1150], [1435, 1085]];

	const cavities = [
		[[510, 895], [845, 645], [890, 655], [925, 660], [965, 632], [1010, 635], [1105, 690], [1065, 735], [985, 790], [945, 822], [800, 918], [570, 918]],
		[[640, 925], [800, 925], [950, 815], [990, 815], [1140, 940], [1100, 982], [450, 1562], [430, 1575], [215, 1405], [185, 1360]],
		[[460, 938], [580, 925], [605, 955], [225, 1320], [160, 1365], [130, 1345], [190, 1280], [160, 1240], [170, 1220]],
		[[1140, 975], [1180, 980], [1290, 1100], [1300, 1140], [690, 1635], [650, 1625], [600, 1575], [575, 1580], [510, 1640], [480, 1625], [460, 1580]],
		[[990, 790], [1100, 715], [1145, 720], [1305, 850], [1270, 890], [1270, 955], [1430, 1095], [1430, 1140], [1345, 1190], [1340, 1150], [1030, 820]]
	];
	const floors = [
		[[570, 918], [850, 715], [920, 718], [965, 700], [1060, 738], [945, 822], [800, 918]],
		[[640, 990], [800, 988], [950, 890], [985, 885], [1110, 985], [450, 1568], [430, 1575], [215, 1405]],
		[[480, 1003], [540, 1005], [225, 1310], [195, 1280]],
		[[1150, 1035], [1175, 1035], [1285, 1130], [1285, 1145], [680, 1625], [650, 1620], [600, 1575], [575, 1580], [510, 1640], [485, 1610]],
		[[1030, 820], [1100, 785], [1145, 785], [1270, 890], [1270, 955], [1425, 1092], [1430, 1135], [1345, 1190], [1340, 1150]]
	];
	// the rings of the lower pocket ignore its notch: the concave corners make them fold over
	const ringBase = [...floors];
	ringBase[3] = [[1150, 1035], [1175, 1035], [1285, 1130], [1285, 1145], [680, 1625], [510, 1640], [485, 1610]];

	const area = (p) => p.reduce((s, a, i) => { const b = p[(i + 1) % p.length]; return s + a[0] * b[1] - b[0] * a[1]; }, 0) / 2;
	const perim = (p) => p.reduce((s, a, i) => { const b = p[(i + 1) % p.length]; return s + Math.hypot(b[0] - a[0], b[1] - a[1]); }, 0);
	const unit = (x, y) => { const l = Math.hypot(x, y) || 1; return [x / l, y / l]; };
	function inset(pts, d) {
		const n = pts.length, sg = Math.sign(area(pts));
		const out = pts.map((b, i) => {
			const a = pts[(i + n - 1) % n], c = pts[(i + 1) % n];
			const u = unit(b[0] - a[0], b[1] - a[1]), v = unit(c[0] - b[0], c[1] - b[1]);
			const n1 = [-u[1], u[0]], n2 = [-v[1], v[0]];
			const k = (sg * d) / Math.max(0.3, 1 + n1[0] * n2[0] + n1[1] * n2[1]);
			return [b[0] + (n1[0] + n2[0]) * k, b[1] + (n1[1] + n2[1]) * k];
		});
		const kept = [];
		for (let i = 0; i < n; i++) {
			const j = (i + 1) % n;
			const dot = (out[j][0] - out[i][0]) * (pts[j][0] - pts[i][0]) + (out[j][1] - out[i][1]) * (pts[j][1] - pts[i][1]);
			if (dot > 0 || j === 0) kept.push(out[i]);
			else { kept.push([(out[i][0] + out[j][0]) / 2, (out[i][1] + out[j][1]) / 2]); i++; }
		}
		return kept;
	}
	function smooth(pts, r = 2.6) {
		const n = pts.length;
		let d = '';
		pts.forEach((b, i) => {
			const a = pts[(i + n - 1) % n], c = pts[(i + 1) % n];
			const la = Math.hypot(b[0] - a[0], b[1] - a[1]), lc = Math.hypot(c[0] - b[0], c[1] - b[1]);
			const ra = Math.min(r, la / 2), rc = Math.min(r, lc / 2);
			const p = [b[0] + ((a[0] - b[0]) / (la || 1)) * ra, b[1] + ((a[1] - b[1]) / (la || 1)) * ra];
			const q = [b[0] + ((c[0] - b[0]) / (lc || 1)) * rc, b[1] + ((c[1] - b[1]) / (lc || 1)) * rc];
			d += `${i ? 'L' : 'M'}${p[0].toFixed(1)} ${p[1].toFixed(1)}Q${b[0].toFixed(1)} ${b[1].toFixed(1)} ${q[0].toFixed(1)} ${q[1].toFixed(1)}`;
		});
		return d + 'Z';
	}
	function rings(floor, step = 6) {
		let cur = inset(floor.map(z), 3);
		const res = [];
		const a0 = Math.sign(area(cur));
		for (let i = 0; i < 40 && cur.length >= 3; i++) {
			// stop once the ring has collapsed to a sliver, its lines would just pile up
			if (Math.sign(area(cur)) !== a0 || (2 * Math.abs(area(cur))) / perim(cur) < 5) break;
			res.push(smooth(cur, 4));
			cur = inset(cur, step);
		}
		return res;
	}
	const round = (pts, r = 4) => smooth(pts.map(z), r);
	const pockets = floors.map((f, i) => ({ d: round(f), lines: rings(ringBase[i]) }));

	const islandTop = [[410, 1310], [665, 1075], [738, 1130], [480, 1370]];
	const islandSide = [[410, 1310], [405, 1355], [480, 1415], [745, 1170], [738, 1130], [480, 1370]];
	const islandLines = rings(islandTop);

	const maroon = [
		[[845, 650], [890, 652], [892, 712], [850, 712]], [[965, 632], [1010, 635], [1012, 692], [968, 695]],
		[[1105, 718], [1147, 720], [1147, 778], [1103, 780]], [[945, 815], [990, 815], [990, 880], [948, 885]],
		[[1140, 975], [1185, 978], [1185, 1035], [1142, 1035]], [[640, 925], [665, 925], [665, 985], [640, 990]],
		[[160, 1225], [172, 1250], [185, 1280], [165, 1292], [155, 1260]], [[140, 1325], [158, 1368], [138, 1365], [128, 1345]],
		[[190, 1365], [215, 1410], [192, 1402], [184, 1385]], [[470, 1572], [458, 1590], [462, 1612], [482, 1628], [484, 1612]],
		[[1098, 688], [1108, 692], [1095, 716]], [[1295, 850], [1306, 860], [1295, 882]], [[1292, 1108], [1306, 1125], [1285, 1142]], [[1132, 945], [1142, 952], [1130, 976]]
	];
	const blues = [
		'905,815 905,790 1145,790 1150,820 1270,935 1420,1100 1425,1128',
		'1465,1090 1420,1105 990,1195 990,1212',
		'845,1008 1068,1250 1068,1270', '845,1008 905,1020 905,1040',
		'905,1022 620,1195 375,1390 375,1415', '640,1265 385,1405', '340,1080 695,1270 692,1300',
		'340,1080 400,1080 398,1098', '465,1140 510,1145 510,1165', '548,1165 548,1190', '615,1175 615,1200'
	];
	const oranges = [
		'818,782 800,805 805,830 835,840', '1160,848 1142,862 1140,890', '860,1030 842,1050 850,1075 870,1085',
		'362,1100 352,1135 385,1147', '490,1160 470,1190 510,1210', '555,1195 552,1220 585,1222',
		'650,1285 638,1320 680,1340', '378,1405 398,1430 390,1462', '1012,1218 985,1245 1015,1265'
	];
	const greens = ['835,840 875,862', '870,1085 902,1102', '1015,1265 1050,1312', '585,1222 622,1248', '385,1147 395,1145', '510,1210 520,1205'];
	const loops = [
		'1345,1190 1350,1212 1340,1205 1355,1215 1382,1215 1372,1200',
		'1375,1192 1385,1190 1382,1210 1400,1200 1395,1180', '1400,1180 1410,1170 1420,1195 1432,1175 1422,1160'
	];
	const pl = (s) => s.split(' ').map((p) => z(p.split(',').map(Number)).join(',')).join(' ');
	const E = (X, Y) => z([X, Y]);

	const rowBg = (i) => (i % 2 ? '#f6f6f6' : '#fff');
</script>

{#snippet ic(name, size = 34, vb = 34)}
	<svg width={size} height={size} viewBox="0 0 {vb} {vb}">{@html icons[name] ?? t20[name] ?? strip[name]}</svg>
{/snippet}

{#snippet bar(list)}
	{#each list as it}
		<div class="cell" style="margin-left:{it.ml}px;width:{it.w}px">
			{#if it.tri}<span class="tri"></span>
			{:else if it.sep}<span class="sep"></span>
			{:else if it.combo}
				<div class="combo"><span>{it.combo}</span><b><i></i></b></div>
			{:else if it.text}<span class="bartext">{it.text}</span>
			{:else if it.box}<span class="boxed">{@render ic(it.i, 18, 20)}</span>
			{:else}{@render ic(it.i, it.s ?? 20, 20)}{/if}
		</div>
	{/each}
{/snippet}

{#snippet big(name, lines, more)}
	<div class="big">
		{@render ic(name)}
		{#each lines as l}<span class="lab">{l}</span>{/each}
		{#if more}<span class="tri down"></span>{/if}
	</div>
{/snippet}

<div class="app">
	<header class="title">
		<div class="logo"><span>NX</span></div>
		<div class="qat">{@render bar(qat)}</div>
		<div class="wintitle">NX 2212.3001 - 加工 - C:\Users\ASUS\Desktop\研究\五轴案例-2.prt</div>
		<div class="siemens">SIEMENS</div>
		<div class="winbtns">
			<button class="wb"><i class="mini"></i></button>
			<button class="wb"><svg width="14" height="14" viewBox="0 0 14 14"><path d="M2 5h8v8H2zM5 5V2h8v8h-3" fill="none" stroke="#fff" stroke-width="1.4"/></svg></button>
			<button class="wb close"><svg width="14" height="14" viewBox="0 0 14 14"><path d="M2 2l10 10M12 2L2 12" stroke="#fff" stroke-width="2.4"/></svg></button>
		</div>
	</header>

	<nav class="tabs">
		{#each tabs as t}
			<div class="tab" class:file={t.file} class:on={t.on} style="margin-left:{t.ml}px;width:{t.w}px">{t.text}</div>
		{/each}
		<div class="search"><span>在此输入以搜索</span>{@render ic('mag', 18, 20)}</div>
		<div class="tools">
			{@render ic('corner', 18, 20)}
			{@render ic('caret', 18, 20)}
			{@render ic('help', 18, 20)}
			{@render ic('bang', 18, 20)}
		</div>
	</nav>

	<section class="ribbon">
		{#each ribbon as g}
			<div class="group" style="width:{g.w}px">
				<div class="items" style="padding-left:{g.pad}px">
					{#each g.items as b}
						<div class="slot" class:dim={b.dim} style="width:{b.w}px">
							{#if b.col}
								<div class="stack">{#each b.col as c}{@render ic(c, 30)}{/each}</div>
							{:else}
								{@render big(b.i, b.l, b.tri)}
							{/if}
						</div>
					{/each}
				</div>
				<div class="gtitle">{g.title}<span class="tri"></span></div>
			</div>
		{/each}

		<div class="group" style="width:315px">
			<div class="items" style="padding-left:9px">
				<div class="slot picked" style="width:54px">{@render big('show', ['显示刀轨'])}</div>
				<div class="slot" style="width:56px;margin-left:1px">{@render big('select', ['选择刀轨'])}</div>
				<div class="slot" style="width:56px">{@render big('toolrep', ['刀轨报告'])}</div>
				<div class="slot" style="width:44px">
					<div class="stack wide">
						{@render ic('hatchEye', 32)}
						<div class="row">{@render ic('cutter', 32)}<span class="tri"></span></div>
					</div>
				</div>
				<div class="slot arrows" style="width:28px;margin-left:16px">
					{@render ic('up', 24)}{@render ic('layers', 22)}{@render ic('down', 24)}
				</div>
				<div class="slot" style="width:50px">{@render big('moreDisp', ['更多'], true)}</div>
			</div>
			<div class="gtitle">显示<span class="tri"></span></div>
		</div>

		<div class="group" style="width:257px">
			<div class="items" style="padding-left:8px">
				<div class="slot" style="width:48px">
					<div class="stack">{@render ic('prev', 32)}<div class="row">{@render ic('first', 32)}<span class="tri"></span></div></div>
				</div>
				<div class="slot" style="width:42px">
					<div class="stack"><div class="row">{@render ic('next', 32)}<span class="tri"></span></div></div>
				</div>
				<div class="slot" style="width:50px">{@render big('play', ['播放'])}</div>
				<div class="slot speed">
					<div class="slider"><i></i></div>
					<span class="lab">速度</span>
				</div>
			</div>
			<div class="gtitle">刀轨动画<span class="tri"></span></div>
		</div>

		<div class="group" style="width:116px">
			<div class="items" style="padding-left:6px">
				<div class="stack">
					<div class="row wideText">{@render ic('ipwShow', 32)}<span class="lab">显示 IPW</span></div>
					<div class="row wideText">{@render ic('ipwAna', 32)}<span class="lab">分析 IPW</span><span class="tri"></span></div>
				</div>
			</div>
			<div class="gtitle">IPW<span class="tri"></span></div>
		</div>

		<div class="group" style="width:166px">
			<div class="items" style="padding-left:8px">
				<div class="stack" style="width:110px">
					<div class="row wideText">{@render ic('fFind', 30)}<span class="lab">查找特征</span></div>
					<div class="row wideText">{@render ic('fProc', 30)}<span class="lab">创建特征工艺</span></div>
				</div>
				<div class="slot" style="width:42px">{@render big('fMore', ['更多'], true)}</div>
			</div>
			<div class="gtitle">特征<span class="tri"></span></div>
		</div>

		<div class="group" style="width:95px">
			<div class="items" style="justify-content:center">
				<div class="slot" style="width:88px">{@render big('postCfg', ['后处理配置器'], true)}</div>
			</div>
			<div class="gtitle">工具<span class="tri"></span></div>
		</div>
		<div class="ribbon-end"><span class="tri"></span></div>
	</section>

	<section class="toolbar">{@render bar(tbar)}</section>

	<main class="main">
		<aside class="strip">
			<div class="gear"><svg width="24" height="24" viewBox="0 0 24 24">{@html strip.gear}</svg></div>
			{#each stripBtns as b}
				<button class="sbtn" class:on={b.on} style="margin-top:{b.gap ?? 2}px">
					<svg width="25" height="25" viewBox="0 0 25 25">{@html strip[b.i]}</svg>
				</button>
			{/each}
		</aside>

		<section class="nav">
			<div class="navhead"><span>工序导航器 - 程序顺序</span><i class="maxi"></i></div>
			<div class="tablewrap">
				<div class="thead">
					<div class="c0">名称</div><div class="c1">换刀</div><div class="c2">刀轨</div><div class="c3">刀具</div><div class="c4">夹持器</div><div class="c5">刀具号</div>
				</div>
				<div class="tbody">
					{#each rows as r, i}
						<div class="trow" class:sel={r.sel} class:focus={r.sel === 2} style="background:{rowBg(i)}">
							<div class="c0 name">
								{#if r.t !== 'root' && r.t !== 'blank'}
									<svg class="gut" width={textX[r.t] - 40} height="20" viewBox="40 0 {textX[r.t] - 40} 20">{@html gutter(r, i)}</svg>
								{/if}
								{#if r.name}<span class="nm" class:root={r.t === 'root'} class:link={r.link}>{r.name}</span>{/if}
							</div>
							<div class="c1">
								{#if r.cutter}
									<svg width="9" height="15" viewBox="0 0 9 15"><rect x=".5" y=".5" width="7" height="14" fill="#aaa" stroke="#333"/><path d="M1 6l6-4M1 10l6-5M1 14l6-5" stroke="#eee"/></svg>
								{/if}
							</div>
							<div class="c2">
								{#if r.tool}
									<svg width="16" height="14" viewBox="0 0 16 14"><path d="M1 7l5 5 8-11" fill="none" stroke="#22d044" stroke-width="2.2"/></svg>
								{/if}
							</div>
							<div class="c3" class:link={r.link}>{r.tool ?? ''}</div>
							<div class="c4" class:link={r.link}>{r.tool ? 'BT40-30' : ''}</div>
							<div class="c5" class:link={r.link}>{r.no ?? ''}</div>
						</div>
					{/each}
				</div>
				<div class="hscroll">
					<svg width="10" height="12" viewBox="0 0 10 12"><path d="M7 2L3 6l4 4" fill="none" stroke="#555" stroke-width="1.8"/></svg>
					<div class="thumb"></div>
					<svg width="10" height="12" viewBox="0 0 10 12"><path d="M3 2l4 4-4 4" fill="none" stroke="#555" stroke-width="1.8"/></svg>
				</div>
			</div>
			<div class="split"><i></i><b></b><i></i></div>
			<div class="drawer"><span>相关性</span><em><svg width="12" height="10" viewBox="0 0 12 10"><path d="M1.5 1.5L6 8l4.5-6.5" fill="none" stroke="#555" stroke-width="2.4"/></svg></em></div>
			<div class="drawer"><span>细节</span><em><svg width="12" height="10" viewBox="0 0 12 10"><path d="M1.5 1.5L6 8l4.5-6.5" fill="none" stroke="#555" stroke-width="2.4"/></svg></em></div>
		</section>

		<section class="graphics">
			<div class="doctabs">
				<div class="doctab">
					<svg width="16" height="14" viewBox="0 0 16 14"><path d="M7 1H2v3h5v3H2v3h5" fill="none" stroke="#6a6a6a"/><path d="M14 6a3.5 3.5 0 0 0-6 0M8 9a3.5 3.5 0 0 0 6 0" fill="none" stroke="#6a6a6a"/></svg>
					<span>五轴案例-2.prt</span>
					<svg width="12" height="12" viewBox="0 0 12 12"><path d="M1 1h6l3 3v7H1z" fill="none" stroke="#fff"/><path d="M5 8l5-5" stroke="#fff" stroke-width="1.4"/></svg>
					<svg width="12" height="12" viewBox="0 0 12 12"><path d="M2 2l8 8M10 2l-8 8" stroke="#fff" stroke-width="2"/></svg>
				</div>
			</div>
			<div class="view">
				<svg class="scene" viewBox="478 207 1442 811" width="1442" height="811">
					<defs>
						{#each pockets as p, i}<clipPath id="fl{i}"><path d={p.d} /></clipPath>{/each}
						<clipPath id="fi"><path d={dOf(islandTop)} /></clipPath>
					</defs>

					<path d={dOf(frontSide)} fill="#5b5c5e" stroke="#333" stroke-width=".7" />
					<path d={dOf(rightSide)} fill="#747577" stroke="#3a3a3a" stroke-width=".7" />
					<path d={dOf(blockSide)} fill="#8e8e8e" stroke="#3a3a3a" stroke-width=".7" />
					<path d={dOf(topFace)} fill="#b5b5b5" stroke="#4a4a4a" stroke-width=".7" />

					{#each cavities as c}<path d={round(c, 5)} fill="#7a7b7d" stroke="#3e3e3e" stroke-width=".9" />{/each}
					<path d={dOf([[450, 945], [470, 935], [485, 980], [465, 990]])} fill="#6cbcec" />
					<path d={dOf([[582, 925], [605, 945], [590, 968]])} fill="#2a7cc8" />
					<path d={dOf([[508, 895], [518, 922], [505, 915]])} fill="#2a7cc8" />

					{#each pockets as p, i}
						<path d={p.d} fill="#b5b5b5" stroke="#555" stroke-width=".6" />
						<g clip-path="url(#fl{i})">
							{#each p.lines as d}<path {d} fill="none" stroke="#1ff0f0" stroke-width="1" />{/each}
						</g>
					{/each}

					<path d={dOf([[665, 925], [800, 925], [945, 830], [945, 885], [820, 985], [665, 985]])} fill="#10b87a" />
					<polyline points={pl('215,1405 640,990 800,988 950,890 985,885 1110,985')} fill="none" stroke="#1fc27f" stroke-width="1.3" />
					{#each maroon as m}<path d={round(m, 4)} fill="#88476a" stroke="#4a3040" stroke-width=".5" />{/each}

					<polyline points={pl('195,1268 365,1095 470,995 580,977')} fill="none" stroke="#f4e83c" stroke-width="3.6" stroke-linejoin="round" />
					<polyline points={pl('205,1300 197,1335 165,1360')} fill="none" stroke="#f4b2b2" stroke-width="3.6" stroke-linecap="round" />

					<path d={dOf(islandSide)} fill="#656668" stroke="#2f2f2f" stroke-width=".7" />
					<path d={dOf(islandTop)} fill="#b6b6b6" stroke="#333" stroke-width=".7" />
					<g clip-path="url(#fi)">
						{#each islandLines as d}<path {d} fill="none" stroke="#1ff0f0" stroke-width="1" />{/each}
					</g>
					<polyline points={pl('403,1358 480,1420 748,1172')} fill="none" stroke="#21c88a" stroke-width="1" />

					{#each blues as b}<polyline points={pl(b)} fill="none" stroke="#1a1af0" stroke-width="1" />{/each}
					{#each oranges as o}<polyline points={pl(o)} fill="none" stroke="#f6b320" stroke-width="1.2" stroke-linejoin="round" />{/each}
					{#each greens as g}<polyline points={pl(g)} fill="none" stroke="#38e030" stroke-width="1.2" />{/each}
					{#each loops as l}<polyline points={pl(l)} fill="none" stroke="#18e0c8" stroke-width="1.2" stroke-linejoin="round" />{/each}

					<!-- work coordinate system -->
					<polyline points={pl('778,1300 783,1110')} stroke="#5a78e8" stroke-width="1.2" fill="none" />
					<path d={dOf([[783, 1055], [772, 1095], [783, 1110], [794, 1095]])} fill="#14409c" />
					<circle cx={E(783, 1098)[0]} cy={E(783, 1098)[1]} r="3" fill="#123a8a" />
					<polyline points={pl('778,1300 925,1420')} stroke="#e09090" stroke-width="1.4" fill="none" />
					<path d={dOf([[912, 1425], [935, 1410], [955, 1445]])} fill="#eea0a0" />
					<polyline points={pl('778,1300 930,1205')} stroke="#c4dcae" stroke-width="1.4" fill="none" />
					<path d={dOf([[925, 1195], [935, 1220], [967, 1180]])} fill="#aac89c" />
					<text x={E(732, 1050)[0]} y={E(732, 1050)[1]} class="wcs" fill="#2a4ee0">ZM</text>
					<text x={E(920, 1165)[0]} y={E(920, 1165)[1]} class="wcs" fill="#3f9a48">YM</text>
					<text x={E(905, 1487)[0]} y={E(905, 1487)[1]} class="wcs" fill="#b83838">XM</text>

					<!-- tool and holder -->
					<path d={dOf([[695, 300], [810, 285], [825, 445], [715, 472]])} fill="#a4653f" stroke="#5e3c28" stroke-width=".6" />
					<ellipse cx={E(770, 465)[0]} cy={E(770, 465)[1]} rx="22" ry="10" fill="#b07049" stroke="#5e3c28" stroke-width=".6" />
					<ellipse cx={E(742, 225)[0]} cy={E(742, 225)[1]} rx="49" ry="25" fill="#b97a55" stroke="#5e3c28" stroke-width=".7" />
					<ellipse cx={E(740, 205)[0]} cy={E(740, 205)[1]} rx="49" ry="25" fill="#c08460" stroke="#5e3c28" stroke-width=".7" />
					<path d="M{E(612, 140).join(' ')}L{E(615, 195).join(' ')}Q{E(735, 295).join(' ')} {E(862, 190).join(' ')}L{E(860, 130).join(' ')}Z" fill="#bb7d59" />
					<ellipse cx={E(735, 135)[0]} cy={E(735, 135)[1]} rx="49" ry="27" fill="#b97a58" stroke="#5e3c28" stroke-width=".7" />
					<ellipse cx={E(738, 155)[0]} cy={E(738, 155)[1]} rx="40" ry="20" fill="#c98e6c" stroke="#8a5a40" stroke-width=".5" />
					<ellipse cx={E(738, 175)[0]} cy={E(738, 175)[1]} rx="30" ry="14" fill="#c68a66" stroke="#8a5a40" stroke-width=".5" />
					<ellipse cx={E(742, 240)[0]} cy={E(742, 240)[1]} rx="14" ry="7" fill="#a86e4c" />
					<path d={dOf([[755, 465], [788, 462], [794, 495], [758, 498]])} fill="#a08272" />
					<ellipse cx={E(770, 463)[0]} cy={E(770, 463)[1]} rx="6.5" ry="3.5" fill="#c0b0a6" stroke="#6a5040" stroke-width=".5" />
					<path d={dOf([[757, 497], [795, 493], [797, 560], [762, 562]])} fill="#676869" stroke="#333" stroke-width=".5" />
					<path d={dOf([[765, 565], [800, 562], [815, 750], [785, 752]])} fill="#c49c16" stroke="#7a6410" stroke-width=".5" />
					<ellipse cx={E(781, 563)[0]} cy={E(781, 563)[1]} rx="7" ry="3" fill="#d8b83a" stroke="#7a6410" stroke-width=".5" />
					<circle cx={E(800, 760)[0]} cy={E(800, 760)[1]} r="5" fill="#e8e2dc" />

					<!-- view triad -->
					<g class="triad">
						<path d="M555 890.7L585 875L615 892.7L583.3 909.3L555 890.7V924L582.3 943.3V909.3M615 892.7L613.3 926L582.3 943.3" fill="none" stroke="#b4b4b4" stroke-width="1.2" />
						<path d="M585 892V872" stroke="#0a34b8" stroke-width="4.5" />
						<path d="M586 851L576 869Q586 866 596 869Z" fill="#0a34b8" />
						<path d="M614 892L630 884" stroke="#2ca030" stroke-width="3" />
						<path d="M637 880L626 879L630 888Z" fill="#2ca030" />
						<path d="M598 917L622 933" stroke="#d02828" stroke-width="4" />
						<path d="M634 942L624 929L616 939Z" fill="#d83030" />
						<text x="583" y="849" class="axis" fill="#2a4ee0">Z</text>
						<text x="640" y="882" class="axis" fill="#3aa040">Y</text>
						<text x="636" y="953" class="axis" fill="#c03838">X</text>
					</g>
				</svg>
			</div>
		</section>
	</main>

	<footer class="status">
		<strong>总计 2</strong>
		<div class="mark">UG爱好者论坛@学习雷锋好榜样*</div>
		<div class="notice">{@render ic('bell', 18, 20)}<span>通知</span></div>
	</footer>
	<div class="taskedge"></div>
</div>

<style>
	:global(body) {
		margin: 0;
		background: #1a1a1a;
	}
	.app {
		width: 1920px;
		height: 1042px;
		overflow: hidden;
		display: flex;
		flex-direction: column;
		font-family: 'Noto Sans', 'Noto Sans CJK SC', sans-serif;
		font-size: 12px;
		color: #222;
	}
	svg {
		display: block;
		flex: none;
	}

	/* title bar */
	.title {
		height: 27px;
		background: #1a1a1a;
		display: flex;
		align-items: center;
		position: relative;
		color: #fff;
	}
	.logo {
		position: absolute;
		left: 3px;
		top: 5px;
		width: 14px;
		height: 16px;
		background: #b0282c;
		border-bottom: 2px solid #1f9a9a;
		border-left: 1px solid #1f9a9a;
		display: flex;
		align-items: center;
		justify-content: center;
	}
	.logo span {
		font-size: 8px;
		font-weight: 700;
		font-family: 'Liberation Sans', sans-serif;
		color: #fff;
	}
	.qat {
		display: flex;
		align-items: center;
		height: 27px;
		width: 420px;
	}
	.wintitle {
		margin-left: 471px;
		font-size: 12.6px;
		white-space: nowrap;
		color: #f0f0f0;
		width: 475px;
	}
	.siemens {
		position: absolute;
		left: 1766px;
		top: 6px;
		font-family: 'Liberation Sans', sans-serif;
		font-weight: 700;
		font-size: 13px;
		letter-spacing: 0.6px;
		color: #fff;
	}
	.winbtns {
		position: absolute;
		left: 1851px;
		top: 3px;
		display: flex;
		gap: 3px;
	}
	.wb {
		width: 21px;
		height: 21px;
		padding: 0;
		border: 1px solid #333;
		border-radius: 2px;
		background: linear-gradient(#7a7a7a, #3f3f3f);
		display: flex;
		align-items: center;
		justify-content: center;
	}
	.wb.close {
		background: linear-gradient(#e88a70, #d0402a);
	}
	.mini {
		display: block;
		width: 8px;
		height: 3px;
		margin-top: 8px;
		background: #fff;
	}

	/* shared bar cells */
	.cell {
		flex: none;
		display: flex;
		align-items: center;
		justify-content: center;
		height: 100%;
	}
	.tri {
		display: inline-block;
		width: 0;
		height: 0;
		border-left: 3px solid transparent;
		border-right: 3px solid transparent;
		border-top: 4px solid #333;
		flex: none;
	}
	.title .tri {
		border-top-color: #ddd;
	}
	.sep {
		display: block;
		width: 1px;
		height: 20px;
		background: #777;
	}
	.bartext {
		white-space: nowrap;
		font-size: 12px;
		line-height: 14px;
	}
	.title .bartext {
		color: #ddd;
	}
	.boxed {
		padding: 2px;
		background: #fff;
		border: 1px solid #777;
		border-radius: 3px;
	}

	/* tabs */
	.tabs {
		height: 28px;
		background: #1a1a1a;
		display: flex;
		align-items: stretch;
		position: relative;
	}
	.tab {
		flex: none;
		color: #e8e8e8;
		font-size: 12px;
		text-align: center;
		line-height: 27px;
		white-space: nowrap;
	}
	.tab.file {
		background: linear-gradient(#1f4f98 0%, #1c4f9c 70%, #4a8fd0 100%);
		border-radius: 3px 3px 0 0;
		color: #fff;
	}
	.tab.on {
		background: #e6e6e6;
		color: #222;
		border-radius: 3px 3px 0 0;
		border: 1px solid #888;
		border-bottom: 0;
		box-sizing: border-box;
		line-height: 26px;
	}
	.search {
		position: absolute;
		left: 1611px;
		top: 2px;
		width: 198px;
		height: 23px;
		box-sizing: border-box;
		background: #3a3a3a;
		border: 1px solid #6a6a6a;
		display: flex;
		align-items: center;
		justify-content: space-between;
		padding-right: 2px;
		color: #8f8f8f;
		line-height: 1;
	}
	.tools {
		position: absolute;
		left: 1819px;
		top: 5px;
		display: flex;
		gap: 8px;
	}

	/* ribbon */
	.ribbon {
		height: 97px;
		display: flex;
		background: linear-gradient(#e6e6e6, #d6d6d6 55%, #c8c8c8);
		border-bottom: 1px solid #a8a8a8;
		box-sizing: border-box;
	}
	.group {
		flex: none;
		display: flex;
		flex-direction: column;
		box-sizing: border-box;
		border-right: 1px solid #f0f0f0;
		margin: 2px 0 2px 0;
	}
	.items {
		height: 73px;
		padding-top: 3px;
		display: flex;
		box-sizing: content-box;
	}
	.gtitle {
		height: 15px;
		line-height: 15px;
		padding-right: 20px;
		text-align: center;
		color: #444;
		font-size: 12px;
		position: relative;
	}
	.gtitle .tri {
		position: absolute;
		right: 8px;
		top: 6px;
		border-top-color: #555;
	}
	.slot {
		flex: none;
		height: 73px;
		box-sizing: border-box;
	}
	.slot.dim .lab {
		color: #999;
	}
	.slot.picked {
		background: #fff;
		border: 1px solid #888;
		border-radius: 3px;
		margin-top: -2px;
		padding-top: 2px;
		height: 76px;
	}
	.big {
		display: flex;
		flex-direction: column;
		align-items: center;
	}
	.big svg {
		margin-bottom: 2px;
	}
	.lab {
		display: block;
		font-size: 12px;
		line-height: 17px;
		white-space: nowrap;
		text-align: center;
	}
	.tri.down {
		margin-top: 6px;
	}
	.stack {
		display: flex;
		flex-direction: column;
		gap: 4px;
		align-items: flex-start;
	}
	.stack.wide {
		align-items: center;
		gap: 4px;
	}
	.row {
		display: flex;
		align-items: center;
		height: 32px;
		gap: 3px;
	}
	.wideText {
		gap: 3px;
	}
	.wideText .lab {
		font-size: 12px;
	}
	.arrows {
		display: flex;
		flex-direction: column;
		align-items: center;
		gap: 1px;
	}
	.speed {
		width: 96px;
		margin-left: 1px;
		display: flex;
		flex-direction: column;
		align-items: center;
	}
	.slider {
		width: 94px;
		height: 3px;
		margin-top: 13px;
		background: #fff;
		border-top: 1px solid #999;
		position: relative;
	}
	.slider i {
		position: absolute;
		left: 38px;
		top: -8px;
		width: 7px;
		height: 18px;
		border-radius: 4px 4px 2px 2px;
		background: linear-gradient(#eaf6ff, #62b4e8);
		border: 1px solid #6a8aa0;
		box-sizing: border-box;
	}
	.speed .lab {
		margin-top: 12px;
	}
	.ribbon-end {
		flex: 1;
		position: relative;
	}
	.ribbon-end .tri {
		position: absolute;
		left: 6px;
		top: 82px;
	}

	/* toolbar */
	.toolbar {
		height: 28px;
		display: flex;
		background: linear-gradient(#cdcdcd, #dcdcdc);
		align-items: stretch;
	}
	.combo {
		width: 100%;
		height: 22px;
		background: #fff;
		border: 1px solid #aaa;
		box-sizing: border-box;
		display: flex;
		align-items: center;
		justify-content: space-between;
		padding-left: 2px;
		font-size: 12px;
	}
	.combo b {
		width: 15px;
		height: 100%;
		background: linear-gradient(#2a6fc8 0%, #b8dcf6 55%, #58a6e0);
		border-left: 1px solid #444;
		display: flex;
		align-items: center;
		justify-content: center;
	}
	.combo i {
		width: 0;
		height: 0;
		border-left: 6px solid transparent;
		border-right: 6px solid transparent;
		border-top: 8px solid #222;
	}

	/* main */
	.main {
		height: 838px;
		display: flex;
		background: #e6e6e6;
	}
	.strip {
		width: 31px;
		flex: none;
		background: linear-gradient(#bcbcbc, #a8a8a8);
		box-sizing: border-box;
		display: flex;
		flex-direction: column;
		align-items: flex-end;
		border-right: 1px solid #d8d8d8;
	}
	.gear {
		width: 30px;
		height: 45px;
		padding-bottom: 14px;
		box-sizing: border-box;
		display: flex;
		align-items: center;
		justify-content: center;
		flex: none;
	}
	.sbtn {
		flex: none;
		width: 26px;
		height: 40px;
		padding: 0;
		background: linear-gradient(#e8e8e8, #d0d0d0);
		border: 1px solid #8a8a8a;
		border-right: 0;
		border-radius: 4px 0 0 4px;
		display: flex;
		align-items: center;
		justify-content: center;
	}
	.sbtn.on {
		width: 29px;
		background: #f0f0f0;
		height: 42px;
	}
	.nav {
		width: 445px;
		flex: none;
		background: #ececec;
		box-sizing: border-box;
		padding: 0 9px 5px 8px;
		border-bottom: 1px solid #999;
		height: 836px;
		border-top: 1px solid #aaa;
		border-right: 1px solid #bbb;
	}
	.navhead {
		height: 30px;
		display: flex;
		align-items: center;
		justify-content: space-between;
		padding: 0 3px 0 4px;
		font-size: 12px;
		font-weight: 600;
		color: #111;
	}
	.maxi {
		width: 12px;
		height: 9px;
		border: 1px solid #222;
		border-top-width: 2px;
	}
	.tablewrap {
		border: 1px solid #777;
		background: #fff;
		width: 427px;
		box-sizing: border-box;
	}
	.thead,
	.trow {
		display: grid;
		grid-template-columns: 153px 36px 36px 79px 73px 48px;
	}
	.thead {
		height: 22px;
		line-height: 21px;
		background: linear-gradient(#f6f6f6, #dcdcdc);
		border-bottom: 1px solid #aaa;
		box-sizing: border-box;
	}
	.thead > div {
		border-right: 1px solid #aaa;
		padding-left: 6px;
		font-size: 12px;
	}
	.tbody {
		height: 701px;
		overflow: hidden;
	}
	.trow {
		height: 20px;
		box-sizing: border-box;
		border-bottom: 1px solid #e6e6e6;
		font-size: 12.5px;
		line-height: 19px;
	}
	.trow > div {
		border-right: 1px solid #e6e6e6;
		white-space: nowrap;
		overflow: hidden;
		padding-left: 6px;
		display: flex;
		align-items: center;
		height: 19px;
	}
	.trow > .name {
		padding-left: 0;
		border-right: 1px solid #000;
		overflow: visible;
	}
	.trow > .c1 {
		padding-left: 8px;
	}
	.trow > .c2 {
		padding-left: 5px;
	}
	.gut {
		flex: none;
	}
	.nm {
		flex: 1;
		padding-left: 0;
	}
	.nm.root {
		padding-left: 3px;
	}
	.link {
		color: #7d6cff;
	}
	.trow.sel > div:not(.name) {
		background: #0078d7;
		color: #fff;
	}
	.trow.sel .nm {
		background: #0078d7;
		color: #fff;
		height: 19px;
		margin-left: -3px;
		padding-left: 3px;
	}
	.trow.focus {
		border-bottom: 1px dotted #f0a030;
		border-top: 1px dotted #f0a030;
	}
	.trow.focus > div {
		height: 18px;
	}
	.hscroll {
		height: 17px;
		background: #efefef;
		display: flex;
		align-items: center;
		padding: 0 5px;
		gap: 5px;
		justify-content: flex-start;
	}
	.thumb {
		width: 197px;
		height: 15px;
		background: #c8c8c8;
		margin-right: auto;
	}
	.split {
		height: 13px;
		display: flex;
		align-items: center;
		gap: 5px;
	}
	.split i {
		flex: 1;
		height: 1px;
		background: #aaa;
	}
	.split b {
		width: 80px;
		height: 5px;
		background: #ccc;
		border: 1px solid #aaa;
	}
	.drawer {
		height: 22px;
		width: 427px;
		box-sizing: border-box;
		margin-bottom: 1px;
		display: flex;
		align-items: center;
		justify-content: space-between;
		padding-left: 6px;
		background: linear-gradient(#f6f6f6 50%, #dcdcdc 55%, #dfdfdf);
		border-bottom: 1px solid #888;
		border-left: 1px solid #999;
		border-right: 1px solid #999;
		color: #1a1a80;
		font-size: 12px;
	}
	.drawer em {
		width: 22px;
		height: 100%;
		border-left: 1px solid #aaa;
		display: flex;
		align-items: center;
		justify-content: center;
		font-style: normal;
	}

	.graphics {
		flex: 1;
		display: flex;
		flex-direction: column;
		min-width: 0;
		margin-left: 2px;
	}
	.doctabs {
		height: 27px;
		flex: none;
		background: #ededed;
		padding-top: 1px;
		box-sizing: border-box;
	}
	.doctab {
		width: 145px;
		height: 26px;
		box-sizing: border-box;
		background: #505050;
		color: #f4f4f4;
		display: flex;
		align-items: center;
		gap: 5px;
		padding-left: 5px;
		font-size: 12px;
	}
	.view {
		flex: 1;
		background: linear-gradient(#2b2c2e, #555658);
		overflow: hidden;
	}
	.wcs {
		font-family: 'Liberation Sans', sans-serif;
		font-size: 13px;
	}
	.axis {
		font-family: 'Liberation Sans', sans-serif;
		font-size: 12px;
	}

	/* status */
	.status {
		height: 21px;
		flex: none;
		background: #d8d8d8;
		border-top: 1px solid #bbb;
		box-sizing: border-box;
		position: relative;
		display: flex;
		align-items: center;
	}
	.status strong {
		margin-left: 904px;
		font-size: 12px;
		font-weight: 600;
	}
	.mark {
		position: absolute;
		left: 1692px;
		top: 1px;
		font-family: 'Liberation Serif', 'Noto Sans CJK SC', serif;
		font-size: 13px;
		letter-spacing: 1.7px;
		color: #8a8a8a;
		white-space: nowrap;
	}
	.notice {
		position: absolute;
		left: 1809px;
		top: 1px;
		display: flex;
		align-items: center;
		gap: 10px;
		color: #222;
	}
	.taskedge {
		height: 3px;
		flex: none;
		background: #22303a;
	}
</style>
